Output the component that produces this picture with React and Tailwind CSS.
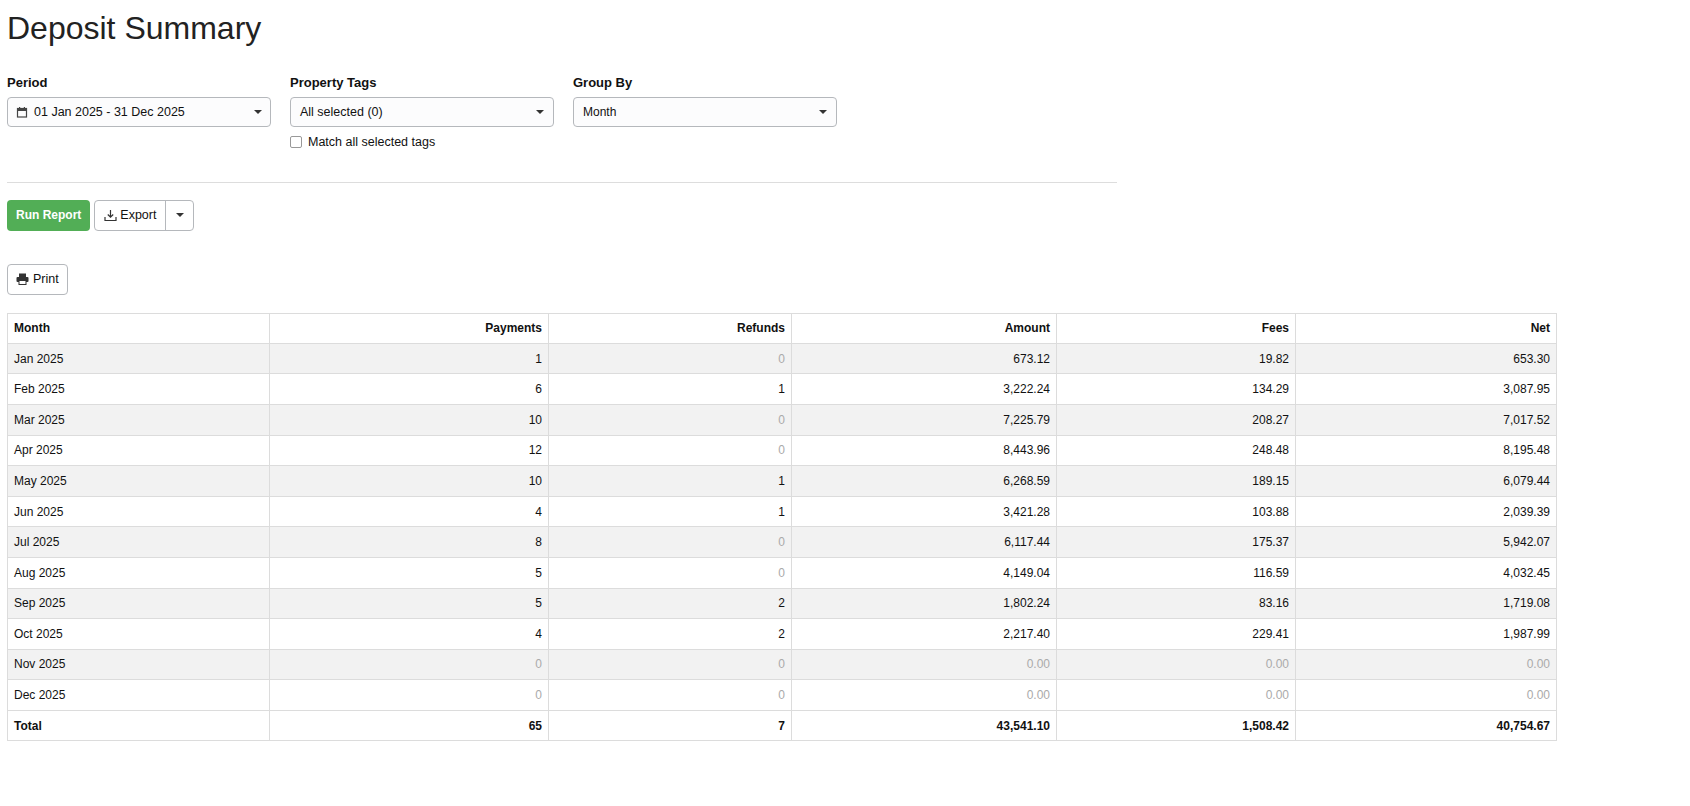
import React from "react";

const rows = [
  ["Jan 2025","1","0","673.12","19.82","653.30"],
  ["Feb 2025","6","1","3,222.24","134.29","3,087.95"],
  ["Mar 2025","10","0","7,225.79","208.27","7,017.52"],
  ["Apr 2025","12","0","8,443.96","248.48","8,195.48"],
  ["May 2025","10","1","6,268.59","189.15","6,079.44"],
  ["Jun 2025","4","1","3,421.28","103.88","2,039.39"],
  ["Jul 2025","8","0","6,117.44","175.37","5,942.07"],
  ["Aug 2025","5","0","4,149.04","116.59","4,032.45"],
  ["Sep 2025","5","2","1,802.24","83.16","1,719.08"],
  ["Oct 2025","4","2","2,217.40","229.41","1,987.99"],
  ["Nov 2025","0","0","0.00","0.00","0.00"],
  ["Dec 2025","0","0","0.00","0.00","0.00"],
];
const widths = ["w-[262px]","w-[279px]","w-[243px]","w-[265px]","w-[239px]","w-[261px]"];
const isZero = (v) => v === "0" || v === "0.00";

const Caret = () => <span className="inline-block w-0 h-0 border-l-[4px] border-r-[4px] border-t-[4px] border-l-transparent border-r-transparent border-t-[#333]" />;

export default function App() {
  return (
    <div className="px-[7px] text-[12px] text-[#111] bg-white min-h-[806px]" style={{fontFamily:'"Liberation Sans", Arial, sans-serif'}}>
      <h1 className="text-[32px] pt-[6px] leading-[44px] text-[#222]">Deposit Summary</h1>
      <div className="flex gap-[19px] mt-[25px]">
        <div className="w-[264px]">
          <div className="font-bold text-[13px] leading-[16px]">Period</div>
          <div className="mt-[6px] h-[30px] border border-[#b5b8bc] rounded-[4px] bg-[#fcfcfd] flex items-center px-[8px] text-[12.5px]">
            <svg width="12" height="12" viewBox="0 0 12 12" className="mr-[6px]"><rect x="1.5" y="2.5" width="9" height="8.5" fill="none" stroke="#444" strokeWidth="1.2"/><rect x="1.5" y="2.5" width="9" height="2.5" fill="#444"/><rect x="3" y="1" width="1.2" height="2" fill="#444"/><rect x="7.8" y="1" width="1.2" height="2" fill="#444"/></svg>
            <span className="flex-1">01 Jan 2025 - 31 Dec 2025</span><Caret />
          </div>
        </div>
        <div className="w-[264px]">
          <div className="font-bold text-[13px] leading-[16px]">Property Tags</div>
          <div className="mt-[6px] h-[30px] border border-[#b5b8bc] rounded-[4px] bg-[#fcfcfd] flex items-center px-[9px] text-[12.5px]">
            <span className="flex-1">All selected (0)</span><Caret />
          </div>
          <label className="flex items-center mt-[6px] text-[12.5px]">
            <span className="w-[12px] h-[12px] border border-[#999] rounded-[2px] mr-[6px] bg-white" />Match all selected tags
          </label>
        </div>
        <div className="w-[264px]">
          <div className="font-bold text-[13px] leading-[16px]">Group By</div>
          <div className="mt-[6px] h-[30px] border border-[#b5b8bc] rounded-[4px] bg-[#fcfcfd] flex items-center px-[9px] text-[12px]">
            <span className="flex-1">Month</span><Caret />
          </div>
        </div>
      </div>
      <div className="w-[1110px] border-t border-[#ddd] mt-[30px]" />
      <div className="flex gap-[4px] mt-[17px]">
        <button className="h-[31px] px-[9px] rounded-[4px] bg-[#52ae56] text-white font-bold text-[12px]">Run Report</button>
        <div className="flex h-[31px] border border-[#b5b8bc] rounded-[4px]">
          <button className="px-[9px] flex items-center gap-[3px] text-[12.5px] border-r border-[#b5b8bc]">
            <svg width="13" height="13" viewBox="0 0 13 13" fill="none" stroke="#333" strokeWidth="1.2"><path d="M6.5 1v7M3.8 5.5l2.7 2.7 2.7-2.7M1 8v3.5h11V8"/></svg>Export
          </button>
          <button className="w-[27px] flex items-center justify-center"><Caret /></button>
        </div>
      </div>
      <button className="mt-[33px] h-[31px] px-[8px] border border-[#b5b8bc] rounded-[4px] flex items-center gap-[4px] text-[12.5px]">
        <svg width="13" height="12" viewBox="0 0 13 12" fill="#333"><rect x="3" y="0.5" width="7" height="3.5"/><rect x="0.5" y="4" width="12" height="5" rx="1"/><rect x="3" y="7.5" width="7" height="4" fill="#fff" stroke="#333" strokeWidth="1"/></svg>Print
      </button>
      <table className="mt-[18px] border-collapse text-[12px]">
        <thead>
          <tr className="h-[30px]">
            {["Month","Payments","Refunds","Amount","Fees","Net"].map((h,i)=>(
              <th key={h} className={`${widths[i]} border border-[#dcdcdc] px-[6px] font-bold ${i===0?"text-left":"text-right"}`}>{h}</th>
            ))}
          </tr>
        </thead>
        <tbody>
          {rows.map((r,ri)=>(
            <tr key={ri} className={`h-[30.6px] ${ri%2===0?"bg-[#f2f2f2]":"bg-white"}`}>
              {r.map((c,i)=>(
                <td key={i} className={`border border-[#dcdcdc] px-[6px] ${i===0?"text-left":"text-right"} ${i>0&&isZero(c)?"text-[#aaa]":""}`}>{c}</td>
              ))}
            </tr>
          ))}
          <tr className="h-[30.6px] font-bold">
            {["Total","65","7","43,541.10","1,508.42","40,754.67"].map((c,i)=>(
              <td key={i} className={`border border-[#dcdcdc] px-[6px] ${i===0?"text-left":"text-right"}`}>{c}</td>
            ))}
          </tr>
        </tbody>
      </table>
    </div>
  );
}
